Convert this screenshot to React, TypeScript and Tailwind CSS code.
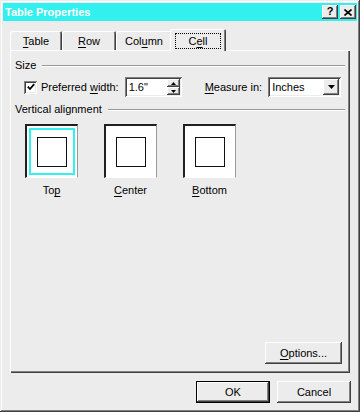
import React from "react";

const raised =
  "shadow-[inset_-1px_-1px_#404040,inset_1px_1px_#ffffff,inset_-2px_-2px_#808080,inset_2px_2px_#ececec]";
const sunken =
  "shadow-[inset_1px_1px_#808080,inset_-1px_-1px_#ffffff,inset_2px_2px_#404040,inset_-2px_-2px_#ececec]";

function U({ children }: { children: React.ReactNode }) {
  return <span className="underline underline-offset-[2px] decoration-[1px]">{children}</span>;
}

function SectionHeader({ label }: { label: string }) {
  return (
    <div className="flex items-center h-[13px]">
      <span className="whitespace-nowrap">{label}</span>
      <div className="flex-1 ml-[6px] h-[2px] border-t border-t-[#9a9a9a] border-b border-b-white" />
    </div>
  );
}

function AlignBox({
  selected,
  label,
}: {
  selected?: boolean;
  label: React.ReactNode;
}) {
  return (
    <div className="flex flex-col items-center w-[53px]">
      <div className="w-[53px] h-[54px] bg-white border-l-2 border-t-2 border-r border-b border-l-[#202020] border-t-[#202020] border-r-[#9a9a9a] border-b-white flex items-center justify-center">
        <div
          className={
            "w-[46px] h-[47px] border-2 flex items-center justify-center " +
            (selected ? "border-[#33f0f0]" : "border-transparent")
          }
        >
          <div className="w-[30px] h-[30px] border-[1.5px] border-[#111111]" />
        </div>
      </div>
      <div className="mt-[6px] h-[13px]">{label}</div>
    </div>
  );
}

function Tab({ w, children }: { w: string; children: React.ReactNode }) {
  return (
    <div
      className={
        w +
        " h-[19px] pt-[4px] flex justify-center rounded-t-[2px] shadow-[inset_1px_1px_#ffffff,inset_-1px_0_#404040,inset_-2px_0_#808080]"
      }
    >
      <span>{children}</span>
    </div>
  );
}

export default function App() {
  return (
    <div
      className={
        "w-[360px] h-[412px] bg-[#ececec] font-['Liberation_Sans',Arial,sans-serif] text-[11px] leading-[13px] text-black flex flex-col p-[3px] shadow-[inset_-1px_-1px_#404040,inset_1px_1px_#ececec,inset_-2px_-2px_#808080,inset_2px_2px_#ffffff]"
      }
    >
      {/* Title bar */}
      <div className="h-[18px] bg-[#33f0f0] flex items-center pl-[2px] pr-[1px]">
        <span className="flex-1 font-bold text-white text-[11px]">Table Properties</span>
        <div className="flex gap-[2px]">
          <div className={"w-[16px] h-[14px] bg-[#ececec] flex items-center justify-center " + raised}>
            <span className="font-bold text-[11px] leading-[11px] -mt-[1px]">?</span>
          </div>
          <div className={"w-[16px] h-[14px] bg-[#ececec] flex items-center justify-center " + raised}>
            <svg width="8" height="7" viewBox="0 0 8 7">
              <path d="M0.5 0.5 L7.5 6.5 M7.5 0.5 L0.5 6.5" stroke="#000" strokeWidth="1.6" />
            </svg>
          </div>
        </div>
      </div>

      {/* Body */}
      <div className="flex flex-col px-[7px] pt-[8px]">
        {/* Tabs */}
        <div className="flex items-end h-[21px] relative z-10">
          <Tab w="w-[52px]">
            <U>T</U>able
          </Tab>
          <Tab w="w-[54px]">
            <U>R</U>ow
          </Tab>
          <Tab w="w-[56px]">
            Col<U>u</U>mn
          </Tab>
          <div className="w-[56px] h-[22px] -ml-[2px] -mb-[1px] pt-[4px] flex justify-center bg-[#ececec] rounded-t-[2px] shadow-[inset_1px_1px_#ffffff,inset_-1px_0_#404040,inset_-2px_0_#808080]">
            <div className="w-[46px] h-[16px] border border-dotted border-black flex items-center justify-center">
              C<U>e</U>ll
            </div>
          </div>
        </div>

        {/* Panel */}
        <div className="h-[323px] flex flex-col px-[5px] pt-[9px] pb-[9px] shadow-[inset_1px_1px_#ffffff,inset_-1px_-1px_#404040,inset_-2px_-2px_#808080]">
          <SectionHeader label="Size" />

          <div className="mt-[5px] h-[20px] flex items-center">
            <div className={"ml-[9px] w-[13px] h-[13px] bg-white flex items-center justify-center " + sunken}>
              <svg width="8" height="8" viewBox="0 0 8 8">
                <path d="M0.8 3.6 L3 6 L7.2 1.2" stroke="#000" strokeWidth="1.8" fill="none" />
              </svg>
            </div>
            <span className="ml-[4px]">
              Preferred <U>w</U>idth:
            </span>
            <div className={"ml-[6px] w-[57px] h-[20px] bg-white flex items-center " + sunken}>
              <span className="flex-1 pl-[4px]">1.6"</span>
              <div className="flex flex-col w-[13px] h-[16px] mr-[2px]">
                <div className={"h-[8px] bg-[#ececec] flex items-center justify-center " + raised}>
                  <svg width="5" height="3" viewBox="0 0 5 3">
                    <path d="M0 3 L2.5 0 L5 3 Z" fill="#000" />
                  </svg>
                </div>
                <div className={"h-[8px] bg-[#ececec] flex items-center justify-center " + raised}>
                  <svg width="5" height="3" viewBox="0 0 5 3">
                    <path d="M0 0 L2.5 3 L5 0 Z" fill="#000" />
                  </svg>
                </div>
              </div>
            </div>
            <span className="ml-[23px]">
              <U>M</U>easure in:
            </span>
            <div className={"ml-[6px] w-[73px] h-[20px] bg-white flex items-center " + sunken}>
              <span className="flex-1 pl-[4px]">Inches</span>
              <div className={"w-[16px] h-[16px] mr-[2px] bg-[#ececec] flex items-center justify-center " + raised}>
                <svg width="7" height="4" viewBox="0 0 7 4">
                  <path d="M0 0 L7 0 L3.5 4 Z" fill="#000" />
                </svg>
              </div>
            </div>
          </div>

          <div className="mt-[6px]">
            <SectionHeader label="Vertical alignment" />
          </div>

          <div className="mt-[8px] ml-[10px] flex gap-[26px]">
            <AlignBox
              selected
              label={
                <span>
                  To<U>p</U>
                </span>
              }
            />
            <AlignBox
              label={
                <span>
                  <U>C</U>enter
                </span>
              }
            />
            <AlignBox
              label={
                <span>
                  <U>B</U>ottom
                </span>
              }
            />
          </div>

          <div className="mt-auto flex justify-end pr-[3px]">
            <div className={"w-[77px] h-[22px] bg-[#ececec] flex items-center justify-center " + raised}>
              <span>
                <U>O</U>ptions...
              </span>
            </div>
          </div>
        </div>

        {/* Footer buttons */}
        <div className="mt-[8px] flex justify-end gap-[7px] -mr-[1px]">
          <div className="w-[74px] h-[22px] border border-black bg-[#ececec] flex items-center justify-center shadow-[inset_-1px_-1px_#404040,inset_1px_1px_#ffffff,inset_-2px_-2px_#808080]">
            OK
          </div>
          <div className={"w-[74px] h-[22px] bg-[#ececec] flex items-center justify-center " + raised}>
            Cancel
          </div>
        </div>
      </div>
    </div>
  );
}
